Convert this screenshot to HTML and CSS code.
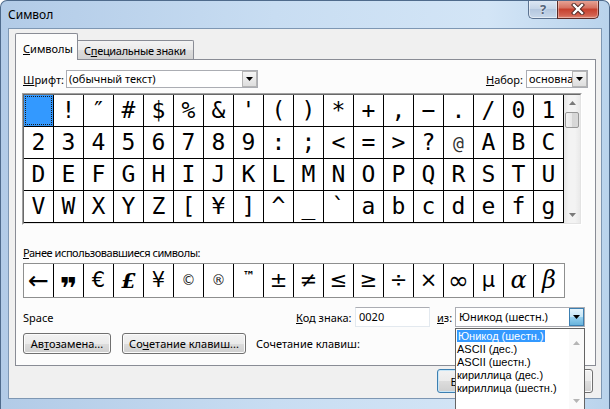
FILE: index.html
```html
<!DOCTYPE html>
<html lang="ru">
<head>
    <meta charset="UTF-8">
    <title>Символ</title>
    <link rel="stylesheet" href="styles.css">
</head>
<body>
<div class="window">
    <div class="titlebar">
        <span class="title">Символ</span>
        <div class="caption-btns">
            <div class="cap-help">?</div>
            <div class="cap-close">
                <svg width="14" height="12" viewBox="0 0 14 12">
                    <path d="M3 2 L11 10 M11 2 L3 10" stroke="#4a2420" stroke-width="4.2" stroke-linecap="square"/>
                    <path d="M3 2 L11 10 M11 2 L3 10" stroke="#fff" stroke-width="2.4" stroke-linecap="square"/>
                </svg>
            </div>
        </div>
    </div>

    <div class="client">
        <div class="tabs">
            <div class="tab active"><u>С</u>имволы</div>
            <div class="tab inactive">С<u>п</u>ециальные знаки</div>
        </div>

        <div class="panel">
            <div class="font-row">
                <label class="font-label"><u>Ш</u>рифт:</label>
                <div class="combo font-combo">
                    <span class="combo-text">(обычный текст)</span>
                    <span class="combo-btn"><svg width="7" height="4"><polygon points="0,0 7,0 3.5,4" fill="#000"/></svg></span>
                </div>
                <label class="set-label"><u>Н</u>абор:</label>
                <div class="combo set-combo">
                    <span class="combo-text">основна</span>
                    <span class="combo-btn"><svg width="7" height="4"><polygon points="0,0 7,0 3.5,4" fill="#000"/></svg></span>
                </div>
            </div>

            <div class="charmap">
                <div class="charmap-inner">
                    <div class="grid">
                        <span class="selected"><i></i></span><span>!</span><span>″</span><span>#</span><span>$</span><span>%</span><span>&amp;</span><span>'</span><span>(</span><span>)</span><span>*</span><span>+</span><span>,</span><span>−</span><span>.</span><span>/</span><span>0</span><span>1</span>
                        <span>2</span><span>3</span><span>4</span><span>5</span><span>6</span><span>7</span><span>8</span><span>9</span><span>:</span><span>;</span><span>&lt;</span><span>=</span><span>&gt;</span><span>?</span><span class="at">@</span><span>A</span><span>B</span><span>C</span>
                        <span>D</span><span>E</span><span>F</span><span>G</span><span>H</span><span>I</span><span>J</span><span>K</span><span>L</span><span>M</span><span>N</span><span>O</span><span>P</span><span>Q</span><span>R</span><span>S</span><span>T</span><span>U</span>
                        <span>V</span><span>W</span><span>X</span><span>Y</span><span>Z</span><span>[</span><span>¥</span><span>]</span><span>^</span><span>_</span><span>`</span><span>a</span><span>b</span><span>c</span><span>d</span><span>e</span><span>f</span><span>g</span>
                    </div>
                    <div class="vscroll">
                        <div class="sb-arrow"><svg width="7" height="4"><polygon points="0,4 7,4 3.5,0" fill="#7a7a7a"/></svg></div>
                        <div class="sb-thumb"></div>
                        <div class="sb-track"></div>
                        <div class="sb-arrow"><svg width="7" height="4"><polygon points="0,0 7,0 3.5,4" fill="#7a7a7a"/></svg></div>
                    </div>
                </div>
            </div>

            <div class="recent-label"><u>Р</u>анее использовавшиеся символы:</div>
            <div class="recent">
                <span class="r-arrow">←</span><span class="r-quote"><b>❞</b></span><span>€</span><span class="r-pound">£</span><span>¥</span><span class="r-small">©</span><span class="r-small">®</span><span class="r-tm">™</span><span>±</span><span>≠</span><span>≤</span><span>≥</span><span>÷</span><span>×</span><span class="r-inf">∞</span><span>μ</span><span class="r-greek">α</span><span class="r-greek">β</span>
            </div>

            <div class="code-row">
                <span class="char-name">Space</span>
                <label class="code-label"><u>К</u>од знака:</label>
                <div class="code-input">0020</div>
                <label class="from-label"><u>и</u>з:</label>
                <div class="combo code-combo">
                    <span class="combo-text">Юникод (шестн.)</span>
                    <span class="combo-btn open"><svg width="7" height="4"><polygon points="0,0 7,0 3.5,4" fill="#000"/></svg></span>
                </div>
            </div>

            <div class="btn-row">
                <button class="btn autocorrect">Ав<u>т</u>озамена...</button>
                <button class="btn shortcut">Со<u>ч</u>етание клавиш...</button>
                <span class="shortcut-text">Сочетание клавиш:</span>
            </div>
        </div>

        <div class="footer">
            <button class="btn dlg-btn insert-btn">Вставить</button>
            <button class="btn dlg-btn">Отмена</button>
        </div>

        <div class="dropdown">
            <div class="dropdown-items">
                <div><span class="sel">Юникод (шестн.)</span></div>
                <div>ASCII (дес.)</div>
                <div>ASCII (шестн.)</div>
                <div>кириллица (дес.)</div>
                <div>кириллица (шестн.)</div>
            </div>
            <div class="dropdown-scroll">
                <svg width="7" height="4"><polygon points="0,4 7,4 3.5,0" fill="#b5b5b5"/></svg>
                <svg width="7" height="4"><polygon points="0,0 7,0 3.5,4" fill="#b5b5b5"/></svg>
            </div>
        </div>
    </div>
</div>
</body>
</html>
```

FILE: styles.css
```css
body {
    margin: 0;
    background: #fff;
    font-family: "Noto Sans", sans-serif;
    font-size: 11px;
    color: #000;
}
u {
    text-decoration: underline;
    text-underline-offset: 1px;
}
.window {
    width: 610px;
    height: 409px;
    box-sizing: border-box;
    border: 1px solid #4f6b8c;
    border-bottom: none;
    border-radius: 7px 7px 0 0;
    background: linear-gradient(to right, #b2cbe7 0%, #c8ddf2 45%, #d3e5f6 80%, #b9d3ec 100%);
    display: flex;
    flex-direction: column;
    overflow: hidden;
}
.titlebar {
    height: 27px;
    flex: none;
    display: flex;
    align-items: flex-start;
}
.title {
    font-size: 12px;
    line-height: 17px;
    margin: 5px 0 0 7px;
}
.caption-btns {
    margin-left: auto;
    margin-right: 10px;
    display: flex;
}
.cap-help {
    box-sizing: border-box;
    width: 29px;
    height: 19px;
    margin-top: -1px;
    border: 1px solid #5b7290;
    border-top: none;
    border-right: none;
    border-radius: 0 0 0 5px;
    background: linear-gradient(#dfe9f5, #c4d4e7 50%, #b3c6de 50%, #c8d8ea);
    box-shadow: inset 0 0 0 1px rgba(255,255,255,0.5);
    text-align: center;
    font-weight: bold;
    font-size: 13px;
    line-height: 18px;
    color: #54647a;
    text-shadow: 0 0 2px #fff;
}
.cap-close {
    box-sizing: border-box;
    width: 42px;
    height: 19px;
    margin-top: -1px;
    border: 1px solid #5a2a26;
    border-top: none;
    border-radius: 0 0 5px 0;
    background: linear-gradient(#e9a99b, #d5705f 45%, #c63f2c 50%, #d2614f 85%, #e08a76);
    box-shadow: inset 0 0 0 1px rgba(255,255,255,0.35);
    display: flex;
    align-items: center;
    justify-content: center;
}
.client {
    flex: 1;
    margin: 0 7px 10px;
    border: 1px solid #7e97b3;
    background: #f0f0f0;
    padding: 4px 6px 0;
    position: relative;
}
.tabs {
    display: flex;
    align-items: flex-end;
    height: 26px;
}
.tab {
    box-sizing: border-box;
    border: 1px solid #898c95;
    border-bottom: none;
    line-height: 15px;
}
.tab.active {
    width: 63px;
    height: 27px;
    margin-bottom: -1px;
    padding: 7px 0 0 7px;
    background: #fcfcfc;
    border-radius: 2px 2px 0 0;
    position: relative;
    z-index: 1;
}
.tab.inactive {
    width: 116px;
    height: 19px;
    border-left: none;
    padding: 2px 0 0 6px;
    letter-spacing: -0.3px;
    background: linear-gradient(#f3f3f3, #ebebeb 50%, #dddddd 50%, #d2d2d2);
    border-radius: 0 2px 0 0;
}
.panel {
    box-sizing: border-box;
    width: 581px;
    height: 307px;
    border: 1px solid #898c95;
    background: #fcfcfc;
    padding: 10px 7px 0;
}
.font-row {
    display: flex;
    align-items: center;
    height: 18px;
}
.font-label {
    width: 43px;
}
.combo {
    box-sizing: border-box;
    height: 18px;
    border: 1px solid #abadb3;
    background: #fff;
    display: flex;
    align-items: stretch;
}
.combo-text {
    flex: 1;
    padding-left: 2px;
    overflow: hidden;
    white-space: nowrap;
    line-height: 16px;
}
.combo-btn {
    width: 15px;
    box-sizing: border-box;
    border: 1px solid #b5b5b5;
    background: linear-gradient(#f6f6f6, #dedede);
    display: flex;
    align-items: center;
    justify-content: center;
}
.combo-btn.open {
    border-color: #3c7fb1;
    background: linear-gradient(#e5f4fc, #c4e5f6 50%, #98d1ef 50%, #68b3db);
}
.font-combo {
    width: 192px;
}
.set-label {
    margin-left: auto;
    margin-right: 3px;
}
.set-combo {
    width: 62px;
}
.charmap {
    margin: 5px 0 0 -1px;
    width: 560px;
    height: 132px;
    box-sizing: border-box;
    border: 1px solid;
    border-color: #a0a0a0 #ffffff #ffffff #a0a0a0;
}
.charmap-inner {
    height: 100%;
    box-sizing: border-box;
    border: 1px solid;
    border-color: #696969 #e3e3e3 #e3e3e3 #696969;
    display: flex;
    background: #fff;
}
.grid {
    display: grid;
    grid-template-columns: repeat(18, 30px);
    grid-auto-rows: 32px;
    width: 540px;
}
.grid span {
    box-sizing: border-box;
    border-right: 1px solid #000;
    border-bottom: 1px solid #000;
    font-family: "DejaVu Sans Mono", monospace;
    font-size: 23px;
    line-height: 31px;
    text-align: center;
}
.grid .selected {
    background: #3399ff;
    padding: 1px;
}
.grid .selected i {
    display: block;
    height: 100%;
    box-sizing: border-box;
    border: 1px dotted #1a1a1a;
}
.grid .at {
    font-size: 18px;
    color: #333;
}
.vscroll {
    width: 16px;
    display: flex;
    flex-direction: column;
    background: linear-gradient(to right, #e6e6e6, #f3f3f3 30%, #f3f3f3 70%, #e9e9e9);
}
.sb-arrow {
    height: 16px;
    display: flex;
    align-items: center;
    justify-content: center;
}
.sb-thumb {
    height: 16px;
    margin: 1px 1px 0;
    box-sizing: border-box;
    border: 1px solid #979797;
    border-radius: 2px;
    background: linear-gradient(to right, #f3f3f3, #e8e8e8 50%, #d6d6d6 50%, #d9d9d9);
}
.sb-track {
    flex: 1;
}
.recent-label {
    margin-top: 21px;
    line-height: 14px;
    letter-spacing: -0.45px;
}
.recent {
    margin-top: 3px;
    width: 542px;
    height: 35px;
    box-sizing: border-box;
    border: 1px solid #8e8f8f;
    background: #fff;
    display: flex;
}
.recent span {
    width: 30px;
    box-sizing: border-box;
    border-right: 1px solid #000;
    font-family: "DejaVu Sans", sans-serif;
    font-size: 21px;
    line-height: 33px;
    text-align: center;
}
.recent span:last-child {
    border-right: none;
}
.recent .r-arrow {
    font-size: 25px;
}
.recent .r-quote b {
    display: inline-block;
    font-size: 30px;
    transform: translateY(8px);
}
.recent .r-pound {
    font-family: "DejaVu Serif", serif;
    font-style: italic;
    font-weight: bold;
}
.recent .r-small {
    font-size: 14px;
    color: #222;
}
.recent .r-tm {
    font-size: 12px;
    font-weight: bold;
    line-height: 24px;
}
.recent .r-inf {
    font-size: 25px;
}
.recent .r-greek {
    font-family: "DejaVu Serif", serif;
    font-style: italic;
    font-size: 24px;
}
.code-row {
    margin-top: 9px;
    display: flex;
    align-items: center;
    height: 20px;
}
.char-name {
    width: 273px;
}
.code-label {
    width: 59px;
}
.code-input {
    box-sizing: border-box;
    width: 75px;
    height: 20px;
    border: 1px solid #e3e9ef;
    border-top-color: #abadb3;
    background: #fff;
    padding-left: 3px;
    line-height: 18px;
}
.from-label {
    margin-left: 7px;
    width: 18px;
}
.code-combo {
    width: 130px;
    height: 20px;
}
.code-combo .combo-text {
    line-height: 18px;
    padding-left: 3px;
}
.btn-row {
    margin-top: 6px;
    display: flex;
    align-items: center;
}
.btn {
    box-sizing: border-box;
    height: 21px;
    border: 1px solid #707070;
    border-radius: 3px;
    background: linear-gradient(#f2f2f2, #ebebeb 50%, #dddddd 50%, #cfcfcf);
    box-shadow: inset 0 0 0 1px #fbfbfb;
    font-family: "Noto Sans", sans-serif;
    font-size: 11px;
    color: #000;
    padding: 0;
}
.autocorrect {
    width: 88px;
}
.shortcut {
    width: 124px;
    margin-left: 11px;
}
.shortcut-text {
    margin-left: 10px;
}
.footer {
    display: flex;
    justify-content: flex-end;
    gap: 6px;
    padding: 3px 2px 0 0;
}
.dlg-btn {
    width: 75px;
    height: 24px;
}
.insert-btn {
    border-color: #3c7fb1;
    box-shadow: inset 0 0 0 1px #c8e6f7;
}
.dropdown {
    position: absolute;
    left: 446px;
    top: 299px;
    width: 130px;
    height: 84px;
    box-sizing: border-box;
    border: 1px solid #646464;
    background: #fff;
    display: flex;
    font-family: "Liberation Sans", sans-serif;
    font-size: 11px;
}
.dropdown-items {
    flex: 1;
    padding-top: 1px;
}
.dropdown-items div {
    height: 13px;
    line-height: 13px;
    padding-left: 1px;
    white-space: nowrap;
}
.sel {
    background: #3399ff;
    color: #fff;
    padding: 0 1px;
}
.dropdown-scroll {
    width: 15px;
    background: #fafafa;
    display: flex;
    flex-direction: column;
    justify-content: space-between;
    align-items: center;
    padding: 12px 0 8px;
}
```
